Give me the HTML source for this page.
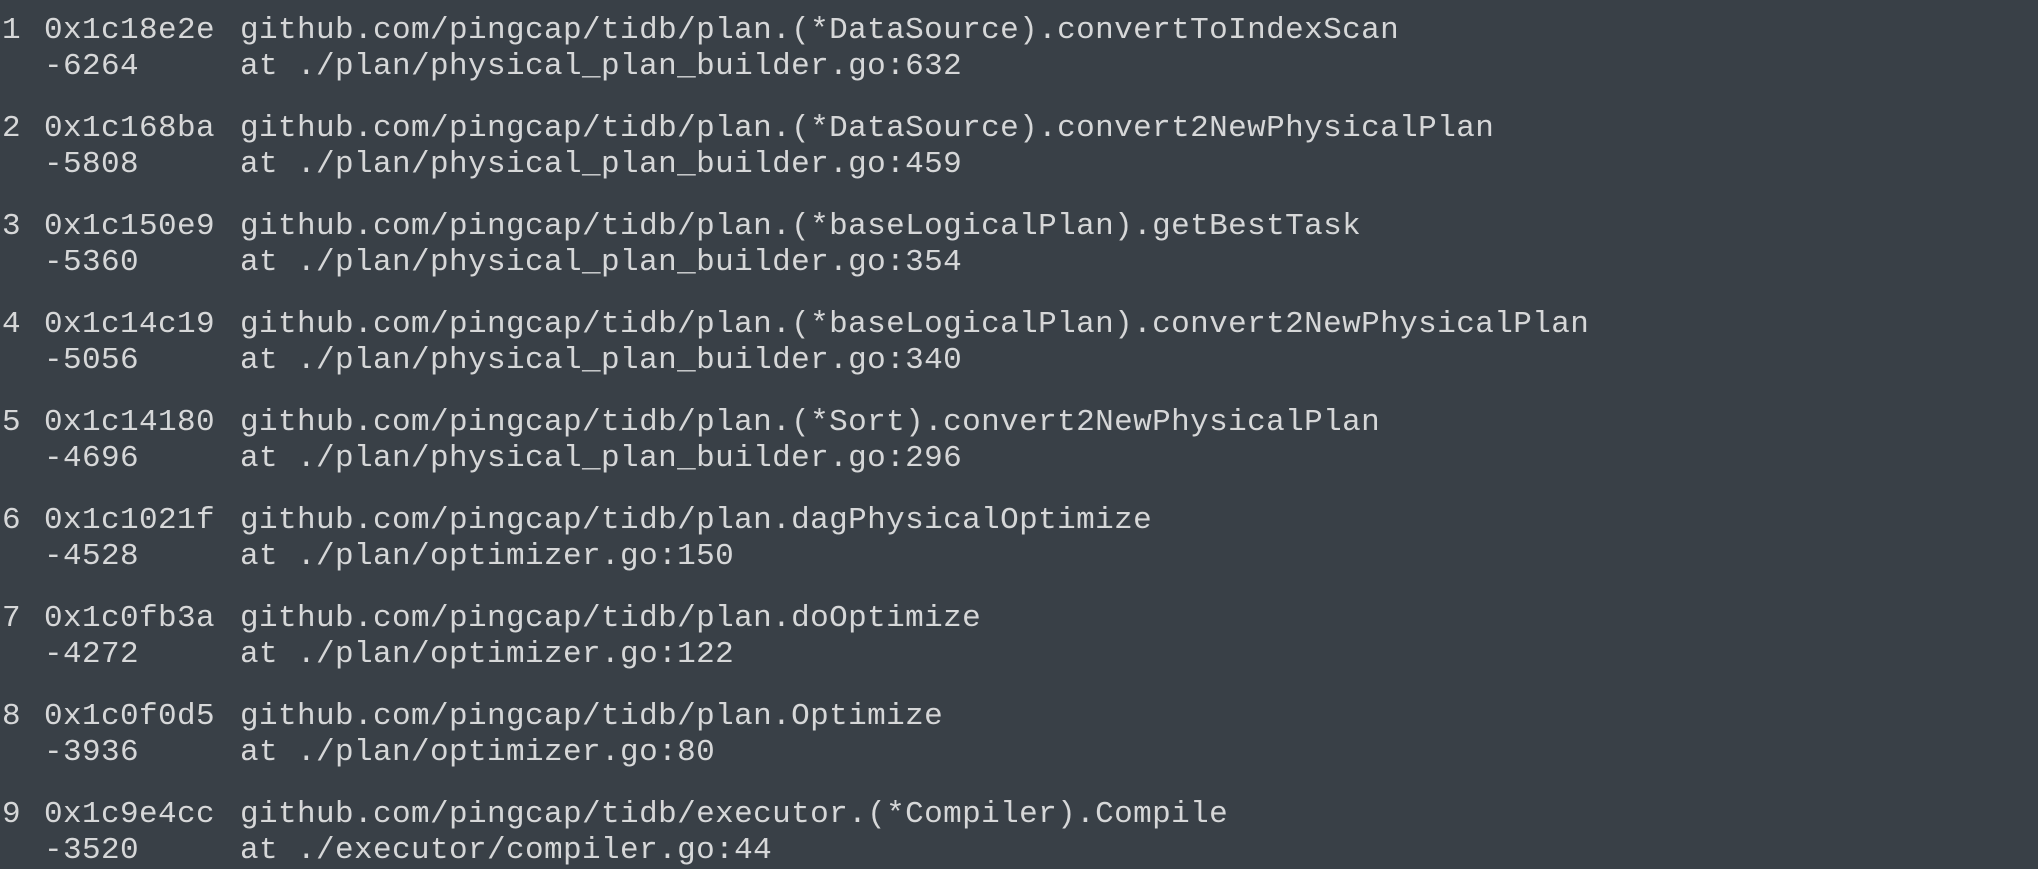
<!DOCTYPE html>
<html><head><meta charset="utf-8"><style>
html,body{margin:0;padding:0;background:#394047;width:2038px;height:850px;overflow:hidden}
body{font-family:"Liberation Mono",monospace;font-size:31px;letter-spacing:0.4px;color:#d6d7d8}
.l{position:absolute;white-space:pre;line-height:36px}
</style></head><body>
<div id="c"></div>
<script>
var d=[["1","0x1c18e2e","github.com/pingcap/tidb/plan.(*DataSource).convertToIndexScan","-6264","at ./plan/physical_plan_builder.go:632"],
["2","0x1c168ba","github.com/pingcap/tidb/plan.(*DataSource).convert2NewPhysicalPlan","-5808","at ./plan/physical_plan_builder.go:459"],
["3","0x1c150e9","github.com/pingcap/tidb/plan.(*baseLogicalPlan).getBestTask","-5360","at ./plan/physical_plan_builder.go:354"],
["4","0x1c14c19","github.com/pingcap/tidb/plan.(*baseLogicalPlan).convert2NewPhysicalPlan","-5056","at ./plan/physical_plan_builder.go:340"],
["5","0x1c14180","github.com/pingcap/tidb/plan.(*Sort).convert2NewPhysicalPlan","-4696","at ./plan/physical_plan_builder.go:296"],
["6","0x1c1021f","github.com/pingcap/tidb/plan.dagPhysicalOptimize","-4528","at ./plan/optimizer.go:150"],
["7","0x1c0fb3a","github.com/pingcap/tidb/plan.doOptimize","-4272","at ./plan/optimizer.go:122"],
["8","0x1c0f0d5","github.com/pingcap/tidb/plan.Optimize","-3936","at ./plan/optimizer.go:80"],
["9","0x1c9e4cc","github.com/pingcap/tidb/executor.(*Compiler).Compile","-3520","at ./executor/compiler.go:44"]];
var h="";
d.forEach(function(r,i){var t=13+i*98;
h+='<div class="l" style="left:2px;top:'+t+'px">'+r[0]+'</div>';
h+='<div class="l" style="left:44px;top:'+t+'px">'+r[1]+'</div>';
h+='<div class="l" style="left:240px;top:'+t+'px">'+r[2]+'</div>';
h+='<div class="l" style="left:44px;top:'+(t+36)+'px">'+r[3]+'</div>';
h+='<div class="l" style="left:240px;top:'+(t+36)+'px">'+r[4]+'</div>';});
document.getElementById("c").innerHTML=h;
</script>
</body></html>
